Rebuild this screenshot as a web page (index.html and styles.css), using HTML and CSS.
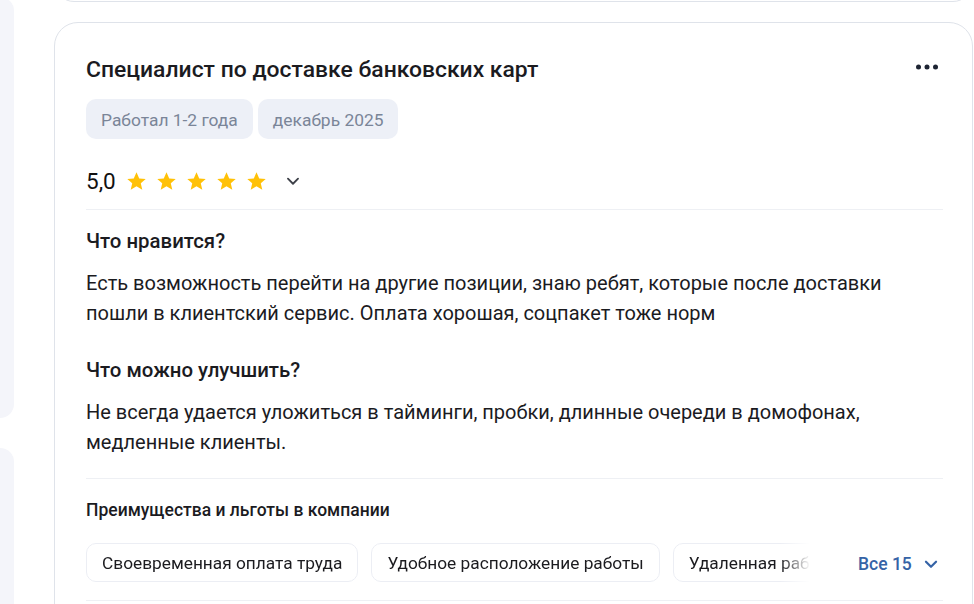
FILE: index.html
```html
<!DOCTYPE html>
<html lang="ru">
<head>
<meta charset="utf-8">
<title>Отзыв</title>
<link rel="stylesheet" href="styles.css">
</head>
<body>
<div class="page">
  <aside class="side">
    <div class="side-block side-block-top"></div>
    <div class="side-block side-block-bottom"></div>
  </aside>
  <main class="feed">
    <div class="card card-prev"></div>
    <article class="card review">
      <div class="review-head">
        <h2 class="review-title">Специалист по доставке банковских карт</h2>
        <button class="more" aria-label="Ещё">
          <svg width="24" height="6" viewBox="0 0 24 6"><circle cx="3.5" cy="3" r="2.5"/><circle cx="12" cy="3" r="2.5"/><circle cx="20.5" cy="3" r="2.5"/></svg>
        </button>
      </div>
      <div class="tags">
        <span class="tag">Работал 1-2 года</span>
        <span class="tag">декабрь 2025</span>
      </div>
      <div class="rating">
        <span class="score">5,0</span>
        <div class="stars">
          <svg class="star" viewBox="0 0 24 24"><path d="M12 1.5l3.1 7 7.4.6-5.6 4.9 1.7 7.4L12 17.5l-6.6 3.9 1.7-7.4-5.6-4.9 7.4-.6z"/></svg>
          <svg class="star" viewBox="0 0 24 24"><path d="M12 1.5l3.1 7 7.4.6-5.6 4.9 1.7 7.4L12 17.5l-6.6 3.9 1.7-7.4-5.6-4.9 7.4-.6z"/></svg>
          <svg class="star" viewBox="0 0 24 24"><path d="M12 1.5l3.1 7 7.4.6-5.6 4.9 1.7 7.4L12 17.5l-6.6 3.9 1.7-7.4-5.6-4.9 7.4-.6z"/></svg>
          <svg class="star" viewBox="0 0 24 24"><path d="M12 1.5l3.1 7 7.4.6-5.6 4.9 1.7 7.4L12 17.5l-6.6 3.9 1.7-7.4-5.6-4.9 7.4-.6z"/></svg>
          <svg class="star" viewBox="0 0 24 24"><path d="M12 1.5l3.1 7 7.4.6-5.6 4.9 1.7 7.4L12 17.5l-6.6 3.9 1.7-7.4-5.6-4.9 7.4-.6z"/></svg>
        </div>
        <svg class="chev chev-dark" viewBox="0 0 24 24"><path d="M6.5 9.5l5.5 5.5 5.5-5.5"/></svg>
      </div>
      <div class="divider divider-rating"></div>
      <h3 class="q">Что нравится?</h3>
      <p class="answer">Есть возможность перейти на другие позиции, знаю ребят, которые после доставки пошли в клиентский сервис. Оплата хорошая, соцпакет тоже норм</p>
      <h3 class="q q-next">Что можно улучшить?</h3>
      <p class="answer">Не всегда удается уложиться в тайминги, пробки, длинные очереди в домофонах, медленные клиенты.</p>
      <div class="divider divider-benefits"></div>
      <h4 class="benefits-title">Преимущества и льготы в компании</h4>
      <div class="benefits">
        <div class="chips">
          <span class="chip">Своевременная оплата труда</span>
          <span class="chip">Удобное расположение работы</span>
          <span class="chip">Удаленная работа</span>
        </div>
        <button class="all">Все 15
          <svg class="chev chev-blue" viewBox="0 0 24 24"><path d="M6.5 9.5l5.5 5.5 5.5-5.5"/></svg>
        </button>
      </div>
      <div class="divider divider-bottom"></div>
    </article>
  </main>
</div>
</body>
</html>
```

FILE: styles.css
```css
* { box-sizing: border-box; }

html, body {
  margin: 0;
  padding: 0;
  background: #ffffff;
  overflow: hidden;
}

body {
  font-family: Roboto, "Noto Sans", "Liberation Sans", sans-serif;
  color: #1b1b1f;
}

.page {
  display: flex;
  gap: 40px;
  width: 974px;
  height: 604px;
}

.side {
  width: 14px;
  flex: none;
  display: flex;
  flex-direction: column;
  gap: 30px;
}

.side-block {
  flex: none;
  background: #f4f5fa;
  border-radius: 0 16px 16px 0;
}

.side-block-top {
  margin-top: -3px;
  height: 421px;
}

.side-block-bottom {
  height: 200px;
}

.feed {
  flex: 1;
  margin-right: 1px;
  display: flex;
  flex-direction: column;
  gap: 20px;
}

.card {
  flex: none;
  border: 1px solid #dfe3ea;
  border-radius: 24px;
  background: #ffffff;
}

.card-prev {
  height: 40px;
  margin-top: -38px;
}

.review {
  padding: 32px 29px 60px 31px;
}

.review-head {
  display: flex;
  align-items: center;
  justify-content: space-between;
}

.review-title {
  margin: 0;
  font-size: 22.9px;
  line-height: 30px;
  font-weight: 500;
  color: #1b1b1f;
}

.more {
  border: 0;
  background: none;
  padding: 0;
  margin-right: 4px;
  margin-top: -6px;
  display: flex;
  fill: #1d2433;
}

.tags {
  display: flex;
  gap: 5px;
  margin-top: 14px;
}

.tag {
  display: flex;
  align-items: center;
  height: 40px;
  padding: 1px 15px 0;
  border-radius: 10px;
  background: #edf0f7;
  color: #7a8598;
  font-size: 17.4px;
}

.rating {
  display: flex;
  align-items: center;
  height: 32px;
  margin-top: 26px;
}

.score {
  font-size: 22.5px;
  line-height: 32px;
  color: #111;
}

.stars {
  display: flex;
  gap: 9px;
  margin-left: 10px;
}

.star {
  width: 21px;
  height: 21px;
  fill: #ffc107;
}

.chev {
  fill: none;
  stroke-width: 2;
  stroke-linecap: round;
  stroke-linejoin: round;
}

.chev-dark {
  width: 22px;
  height: 22px;
  margin-left: 15px;
  stroke: #3d4048;
}

.divider {
  height: 1px;
  background: #eef0f4;
}

.divider-rating { margin-top: 12px; }

.q {
  margin: 18px 0 0;
  font-size: 20.4px;
  line-height: 26px;
  font-weight: 500;
  color: #1b1b1f;
}

.q-next { margin-top: 29px; }

.answer {
  margin: 14px 0 0;
  font-size: 20px;
  line-height: 30px;
  color: #1b1b1f;
}

.divider-benefits { margin-top: 21px; }

.benefits-title {
  margin: 19px 0 0;
  font-size: 17.5px;
  line-height: 24px;
  font-weight: 500;
  color: #1b1b1f;
}

.benefits {
  display: flex;
  align-items: center;
  margin-top: 21px;
}

.chips {
  display: flex;
  gap: 13px;
  width: 724px;
  overflow: hidden;
  -webkit-mask-image: linear-gradient(to right, #000 694px, transparent 724px);
  mask-image: linear-gradient(to right, #000 694px, transparent 724px);
}

.chip {
  flex: none;
  display: flex;
  align-items: center;
  height: 39px;
  padding: 1px 15px 0;
  border: 1px solid #eceef4;
  border-radius: 10px;
  font-size: 17.3px;
  color: #1b1b1f;
  white-space: nowrap;
}

.all {
  margin-left: 48px;
  margin-top: 2px;
  display: flex;
  align-items: center;
  gap: 8px;
  border: 0;
  background: none;
  padding: 0;
  font-family: inherit;
  font-size: 17.5px;
  font-weight: 500;
  color: #3563a6;
}

.chev-blue {
  width: 22px;
  height: 22px;
  stroke: #3563a6;
  stroke-width: 2.4;
}

.divider-bottom { margin-top: 18px; }
```
